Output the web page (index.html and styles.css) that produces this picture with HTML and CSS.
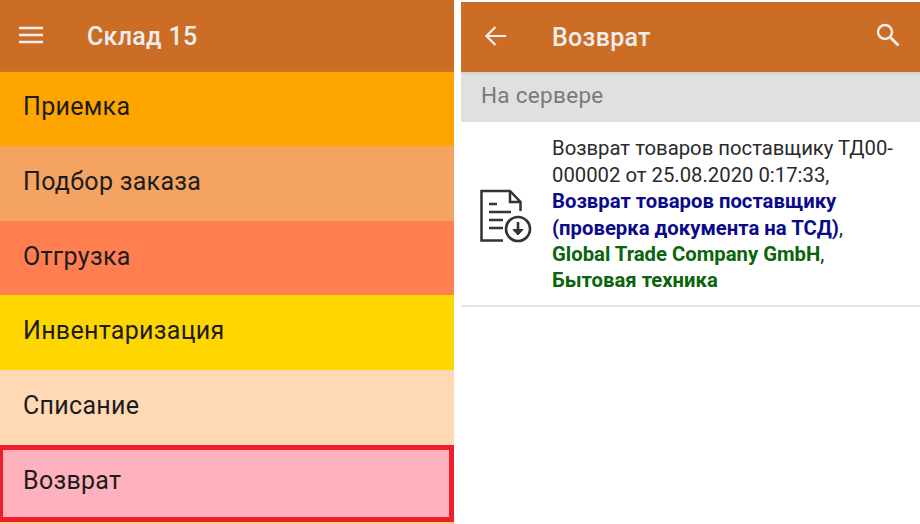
FILE: index.html
```html
<!DOCTYPE html>
<html lang="ru">
<head>
<meta charset="utf-8">
<title>Возврат</title>
<link rel="stylesheet" href="styles.css">
</head>
<body>
<section class="panel panel-menu">
  <header class="bar bar-menu">
    <svg class="icon-menu" width="24" height="18" viewBox="0 0 24 18"><path d="M0 2h24M0 9h24M0 16h24" stroke="#f2f0ee" stroke-width="2.400" fill="none"/></svg>
    <h1 class="bar-title">Склад 15</h1>
  </header>
  <nav class="menu">
    <div class="item c1">Приемка</div>
    <div class="item c2">Подбор заказа</div>
    <div class="item c3">Отгрузка</div>
    <div class="item c4">Инвентаризация</div>
    <div class="item c5">Списание</div>
    <div class="item c6">Возврат</div>
  </nav>
</section>
<section class="panel panel-doc">
  <header class="bar bar-doc">
    <svg class="icon-back" width="24" height="24" viewBox="0 0 24 24"><path d="M22 12H3M11.500 3 2.500 12l9 9" stroke="#f2f0ee" stroke-width="2.200" fill="none"/></svg>
    <h1 class="bar-title">Возврат</h1>
    <svg class="icon-search" width="24" height="24" viewBox="0 0 24 24"><circle cx="9" cy="9" r="7" stroke="#f2f0ee" stroke-width="2.500" fill="none"/><path d="m14.500 14.500 8 8" stroke="#f2f0ee" stroke-width="2.800" fill="none"/></svg>
  </header>
  <div class="group">На сервере</div>
  <article class="doc">
    <svg class="doc-icon" width="54" height="54" viewBox="0 0 54 54" fill="none" stroke="#333">
      <path d="M23 51.500H1.500V2H30L40.500 13V22" stroke-width="2.500"/>
      <path d="M30 2V13H40.500" stroke-width="2.500"/>
      <path d="M9 15h8M9 23h22M9 31h14M9 39h14" stroke-width="2.500"/>
      <circle cx="38" cy="40" r="12" stroke-width="2.600"/>
      <path d="M38 33v9" stroke-width="2.600"/>
      <path d="m33 40.500 5 5.500 5-5.500z" fill="#333" stroke-width="1"/>
    </svg>
    <p class="doc-text">Возврат товаров поставщику ТД00-000002 от 25.08.2020 0:17:33,<br><b class="blue">Возврат товаров поставщику (проверка документа на ТСД)</b>,<br><b class="green">Global Trade Company GmbH</b>,<br><b class="green">Бытовая техника</b></p>
  </article>
</section>
</body>
</html>
```
FILE: styles.css
```css
* { box-sizing: border-box; margin: 0; padding: 0; }
html, body { width: 920px; height: 524px; overflow: hidden; background: #fff; }
body { display: flex; gap: 7px; font-family: Roboto, "Liberation Sans", sans-serif; }
.panel { display: flex; flex-direction: column; height: 524px; }
.panel-menu { width: 454px; }
.panel-doc { width: 459px; padding-top: 2px; }
.bar { display: flex; align-items: center; background: #cc6d26; color: #f0eeec; flex: none; }
.bar-menu { height: 72px; padding: 0 18px 0 19px; box-shadow: inset 0 -2px 1px #c9761d; }
.bar-doc { height: 70px; padding: 0 20px 0 23px; }
.bar-title { font-size: 25px; font-weight: 500; letter-spacing: .3px; line-height: 30px; margin-top: 2px; }
.bar-menu .bar-title { margin-left: 44px; }
.bar-doc .bar-title { margin-left: 44px; flex: 1; }
.icon-menu { flex: none; margin-top: -2px; }
.icon-back { flex: none; margin-top: -3px; }
.icon-search { flex: none; margin-top: -4px; }
.menu { display: flex; flex-direction: column; background: #ffd28c; height: 452px; }
.item { height: 74.800px; flex: none; display: flex; align-items: center; padding: 0 0 4px 23px; font-size: 25px; letter-spacing: .3px; color: #1c1c1c; }
.c1 { background: #ffa500; height: 73.800px; }
.c2 { background: #f4a460; }
.c3 { background: #ff7f50; padding-bottom: 3px; }
.c4 { background: #ffd700; }
.c5 { background: #ffd8b5; }
.c6 { background: #ffb2be; border: 5px solid #ee1f2a; border-left-width: 3px; padding: 0 0 5px 20px; height: 76.700px; }
.group { height: 50px; flex: none; background: #e0e0e0; color: #7a7a7a; font-size: 22.500px; letter-spacing: .3px; padding: 9px 0 0 20px; line-height: 28px; box-shadow: inset 0 3px 2px -1px #cfcfcf; }
.doc { display: flex; align-items: center; height: 185px; border-bottom: 2px solid #e6e6e6; flex: none; padding: 0 20px 0 19px; }
.doc-icon { flex: none; margin-right: 18px; margin-top: 4px; }
.doc-text { font-size: 20.300px; line-height: 26.400px; color: #2a2a2a; margin-top: 2px; }
.blue { color: #0b0b8a; font-weight: 700; }
.green { color: #0a640a; font-weight: 700; }
```
